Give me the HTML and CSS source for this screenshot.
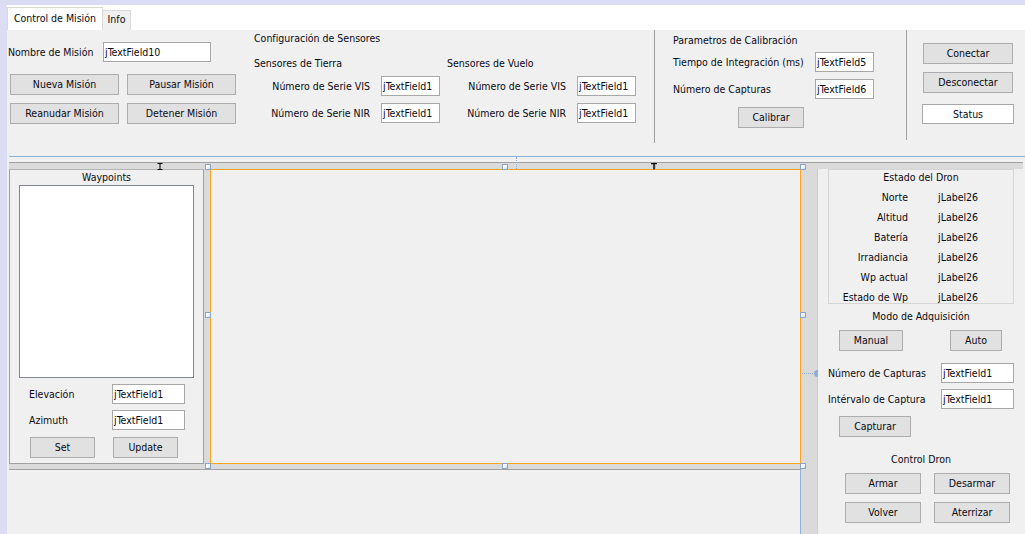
FILE: index.html
```html
<!DOCTYPE html>
<html lang="es">
<head>
<meta charset="utf-8">
<title>Control de Misión</title>
<link rel="stylesheet" href="styles.css">
</head>
<body>
<div class="ide">
  <div class="sheet">
    <div class="tabs">
      <div class="tab active">Control de Misión</div>
      <div class="tab info">Info</div>
    </div>

    <div class="top">
      <div class="grp-mision">
        <div class="frow">
          <span class="lbl-name">Nombre de Misión</span>
          <div class="tf w108">jTextField10</div>
        </div>
        <div class="btn-grid">
          <button class="btn">Nueva Misión</button>
          <button class="btn">Pausar Misión</button>
          <button class="btn">Reanudar Misión</button>
          <button class="btn">Detener Misión</button>
        </div>
      </div>

      <div class="grp-sens">
        <div class="title">Configuración de Sensores</div>
        <div class="sens-cols">
          <div class="sens-col tierra">
            <div class="sub">Sensores de Tierra</div>
            <div class="frow"><span class="rl">Número de Serie VIS</span><div class="tf w59">jTextField1</div></div>
            <div class="frow r2"><span class="rl">Número de Serie NIR</span><div class="tf w59">jTextField1</div></div>
          </div>
          <div class="sens-col vuelo">
            <div class="sub">Sensores de Vuelo</div>
            <div class="frow"><span class="rl">Número de Serie VIS</span><div class="tf w59">jTextField1</div></div>
            <div class="frow r2"><span class="rl">Número de Serie NIR</span><div class="tf w59">jTextField1</div></div>
          </div>
        </div>
      </div>

      <div class="vsep s1"></div>

      <div class="grp-calib">
        <div class="title">Parametros de Calibración</div>
        <div class="frow c1"><span class="cl">Tiempo de Integración (ms)</span><div class="tf w59">jTextField5</div></div>
        <div class="frow c2"><span class="cl">Número de Capturas</span><div class="tf w59">jTextField6</div></div>
        <button class="btn calibrar">Calibrar</button>
      </div>

      <div class="vsep s2"></div>

      <div class="grp-conn">
        <button class="btn conn">Conectar</button>
        <button class="btn conn d2">Desconectar</button>
        <div class="status">Status</div>
      </div>
    </div>

    <div class="sepzone"><div class="blueline"></div></div>

    <div class="designer">
      <div class="dbar"></div>
      <div class="dbody">
        <div class="canvas">
          <div class="splitrow">
            <div class="wp">
              <div class="wp-title">Waypoints</div>
              <div class="wp-list"></div>
              <div class="frow wp-row"><span class="wl">Elevación</span><div class="tf w73">jTextField1</div></div>
              <div class="frow wp-row r2"><span class="wl">Azimuth</span><div class="tf w73">jTextField1</div></div>
              <div class="wp-btns">
                <button class="btn set">Set</button>
                <button class="btn upd">Update</button>
              </div>
            </div>
            <div class="divider"></div>
            <div class="selbox"></div>
          </div>
          <div class="bbar"></div>
          <div class="rest"></div>
        </div>

        <div class="rside">
          <div class="gstrip"></div>
          <div class="rcontent">
            <div class="estado">
              <div class="est-title">Estado del Dron</div>
              <div class="est-grid">
                <span class="ek">Norte</span><span class="ev">jLabel26</span>
                <span class="ek">Altitud</span><span class="ev">jLabel26</span>
                <span class="ek">Batería</span><span class="ev">jLabel26</span>
                <span class="ek">Irradiancia</span><span class="ev">jLabel26</span>
                <span class="ek">Wp actual</span><span class="ev">jLabel26</span>
                <span class="ek">Estado de Wp</span><span class="ev">jLabel26</span>
              </div>
            </div>
            <div class="ctitle modo">Modo de Adquisición</div>
            <div class="mrow">
              <button class="btn manual">Manual</button>
              <button class="btn auto">Auto</button>
            </div>
            <div class="frow cap1"><span class="kl">Número de Capturas</span><div class="tf w73">jTextField1</div></div>
            <div class="frow cap2"><span class="kl">Intérvalo de Captura</span><div class="tf w73">jTextField1</div></div>
            <button class="btn capturar">Capturar</button>
            <div class="ctitle cdron">Control Dron</div>
            <div class="drow d1">
              <button class="btn dbtn">Armar</button>
              <button class="btn dbtn second">Desarmar</button>
            </div>
            <div class="drow d2r">
              <button class="btn dbtn">Volver</button>
              <button class="btn dbtn second">Aterrizar</button>
            </div>
          </div>
        </div>
      </div>
    </div>
  </div>

  <!-- designer annotations overlaying the canvas -->
  <div class="handle" style="left:205px;top:164px"></div>
  <div class="handle" style="left:502px;top:164px"></div>
  <div class="handle" style="left:800px;top:164px"></div>
  <div class="handle" style="left:205px;top:312px"></div>
  <div class="handle" style="left:800px;top:312px"></div>
  <div class="handle" style="left:205px;top:463px"></div>
  <div class="handle" style="left:502px;top:463px"></div>
  <div class="handle" style="left:800px;top:463px"></div>

  <svg class="mark ibeam" width="7" height="7" viewBox="0 0 7 7"><path d="M0.5 0.5H5.5M3 0.5V6.5M0.5 6.5H5.5" stroke="#000" stroke-width="1" fill="none"/></svg>
  <svg class="mark tee" width="7" height="7" viewBox="0 0 7 7"><path d="M0 0.5H6M3 0.5V6.5" stroke="#000" stroke-width="1.4" fill="none"/><path d="M4.5 2V7" stroke="#bbb" stroke-width="1"/></svg>
  <div class="vdots"></div>
  <div class="hdots"></div>
  <div class="hknob"></div>
</div>
</body>
</html>
```

FILE: styles.css
```css
* { box-sizing: border-box; }
html, body { margin: 0; padding: 0; }
body {
  width: 1025px;
  height: 534px;
  overflow: hidden;
  background: #dcdcf5;
  font-family: "DejaVu Sans Condensed", "Liberation Sans", sans-serif;
  font-size: 10.5px;
  color: #0a0a14;
}
.ide {
  position: relative;
  height: 534px;
  padding: 5px 0 0 7px;
}
.sheet {
  background: #f0f0f0;
  height: 529px;
  display: flex;
  flex-direction: column;
}

/* tabs */
.tabs {
  height: 25px;
  background: #fff;
  display: flex;
  align-items: flex-end;
  flex: none;
}
.tab {
  border: 1px solid #d9d9d9;
  border-bottom: none;
  text-align: center;
  white-space: nowrap;
}
.tab.active {
  height: 23px;
  width: 96px;
  background: #fff;
  line-height: 18px;
  padding-top: 1px;
}
.tab.info {
  height: 20px;
  width: 28px;
  border-left: none;
  background: #f0f0f0;
  line-height: 17px;
}

/* generic controls */
.frow { display: flex; align-items: center; height: 20px; }
.tf {
  height: 20px;
  border: 1px solid #a8a8a8;
  background: #fff;
  padding-left: 1px;
  line-height: 18px;
  white-space: nowrap;
  overflow: hidden;
  flex: none;
}
.w108 { width: 108px; }
.w59 { width: 59px; }
.w73 { width: 73px; }
.btn {
  display: block;
  height: 21px;
  border: 1px solid #adadad;
  background: #e1e1e1;
  font: inherit;
  color: inherit;
  padding: 0;
  margin: 0;
  line-height: 19px;
  text-align: center;
  white-space: nowrap;
}

/* top panel */
.top {
  height: 121px;
  display: flex;
  align-items: flex-start;
  flex: none;
}
.grp-mision { margin-left: 1px; padding-top: 12px; width: 229px; }
.lbl-name { width: 95px; white-space: nowrap; }
.btn-grid {
  margin-top: 12px;
  margin-left: 2px;
  display: grid;
  grid-template-columns: 109px 109px;
  column-gap: 8px;
  row-gap: 8px;
}
.grp-sens { margin-left: 17px; }
.title { line-height: 16px; white-space: nowrap; }
.sens-cols { display: flex; margin-top: 9px; }
.sens-col.vuelo { margin-left: 7px; }
.sub { line-height: 16px; height: 16px; white-space: nowrap; }
.sens-col .frow { margin-top: 5px; }
.sens-col .frow.r2 { margin-top: 7px; }
.rl { text-align: right; margin-right: 11px; white-space: nowrap; }
.tierra .rl { width: 116px; }
.vuelo .rl { width: 119px; }

.vsep { width: 1px; background: #a0a0a0; flex: none; }
.vsep.s1 { margin-left: 18px; height: 113px; }
.vsep.s2 { margin-left: 32px; height: 110px; }

.grp-calib { margin-left: 18px; padding-top: 2px; }
.cl { width: 142px; white-space: nowrap; }
.frow.c1 { margin-top: 4px; }
.frow.c2 { margin-top: 7px; }
.btn.calibrar { margin-top: 8px; margin-left: 65px; width: 66px; }

.grp-conn { margin-left: 16px; padding-top: 13px; }
.btn.conn { width: 90px; }
.btn.conn.d2 { margin-top: 8px; }
.status {
  margin-top: 11px;
  margin-left: -1px;
  width: 92px;
  height: 20px;
  border: 1px solid #a8a8a8;
  background: #fff;
  text-align: center;
  line-height: 18px;
}

/* separator zone */
.sepzone { height: 11px; padding-top: 5px; flex: none; }
.blueline { height: 1px; margin-left: 2px; background: #8fb0d8; }

/* designer area */
.designer { flex: 1; display: flex; flex-direction: column; margin-left: 2px; }
.dbar {
  height: 7px;
  width: 1014px;
  border-top: 1px solid #a0a0a0;
  background: #dadada;
  flex: none;
}
.dbody { flex: 1; display: flex; }
.canvas { width: 792px; display: flex; flex-direction: column; flex: none; }
.splitrow { height: 295px; display: flex; flex: none; }
.wp {
  width: 195px;
  border: 1px solid #a0a0a0;
  border-top-color: #b5b5b5;
}
.wp-title { text-align: center; line-height: 15px; height: 15px; }
.wp-list {
  margin-left: 9px;
  width: 175px;
  height: 193px;
  border: 1px solid #828790;
  background: #fff;
}
.wp-row { margin-top: 6px; }
.wl { width: 102px; padding-left: 19px; white-space: nowrap; }
.wp-btns { display: flex; margin-top: 7px; }
.btn.set { margin-left: 20px; width: 65px; }
.btn.upd { margin-left: 18px; width: 65px; }
.divider { width: 6px; background: #dadada; }
.selbox { width: 591px; border: 1px solid #ffa41c; background: #f0f0f0; }
.bbar { height: 6px; background: #dadada; border-bottom: 1px solid #a0a0a0; flex: none; }
.rest { flex: 1; border-right: 1px solid #8fb0d8; }

.rside { flex: 1; display: flex; }
.gstrip { width: 17px; background: #dadada; border-right: 1px solid #cdcdcd; flex: none; }
.rcontent { flex: 1; display: flex; flex-direction: column; align-items: flex-start; }
.estado {
  margin-left: 10px;
  width: 186px;
  height: 135px;
  border: 1px solid #d5d5d5;
}
.est-title { text-align: center; line-height: 15px; }
.est-grid {
  margin-top: 2px;
  display: grid;
  grid-template-columns: 79px auto;
  column-gap: 30px;
  grid-auto-rows: 20px;
  align-items: center;
}
.ek { text-align: right; white-space: nowrap; }
.ev { white-space: nowrap; }
.ctitle { margin-left: 10px; width: 186px; text-align: center; line-height: 16px; }
.ctitle.modo { margin-top: 4px; }
.mrow { display: flex; margin-top: 6px; }
.btn.manual { margin-left: 21px; width: 64px; }
.btn.auto { margin-left: 47px; width: 52px; }
.kl { width: 123px; padding-left: 10px; white-space: nowrap; }
.frow.cap1 { margin-top: 12px; }
.frow.cap2 { margin-top: 6px; }
.btn.capturar { margin-top: 7px; margin-left: 21px; width: 72px; }
.ctitle.cdron { margin-top: 14px; }
.drow { display: flex; }
.drow.d1 { margin-top: 6px; }
.drow.d2r { margin-top: 8px; }
.btn.dbtn { width: 76px; }
.btn.dbtn:first-child { margin-left: 27px; }
.btn.dbtn.second { margin-left: 13px; }

/* designer annotations (overlays) */
.handle {
  position: absolute;
  width: 6px;
  height: 6px;
  border: 1px solid #8aa6c6;
  background: linear-gradient(135deg, #ffffff 40%, #c9d9ea);
}
.mark { position: absolute; display: block; }
.ibeam { left: 157px; top: 163px; }
.tee { left: 651px; top: 163px; }
.vdots {
  position: absolute;
  left: 516px;
  top: 157px;
  width: 1px;
  height: 12px;
  border-left: 1px dotted #8fb0d8;
}
.hdots {
  position: absolute;
  left: 802px;
  top: 373px;
  width: 13px;
  height: 1px;
  border-top: 1px dotted #8fb0d8;
}
.hknob {
  position: absolute;
  left: 814px;
  top: 370px;
  width: 4px;
  height: 7px;
  border-radius: 4px 0 0 4px;
  background: #8fb0d8;
}
```
